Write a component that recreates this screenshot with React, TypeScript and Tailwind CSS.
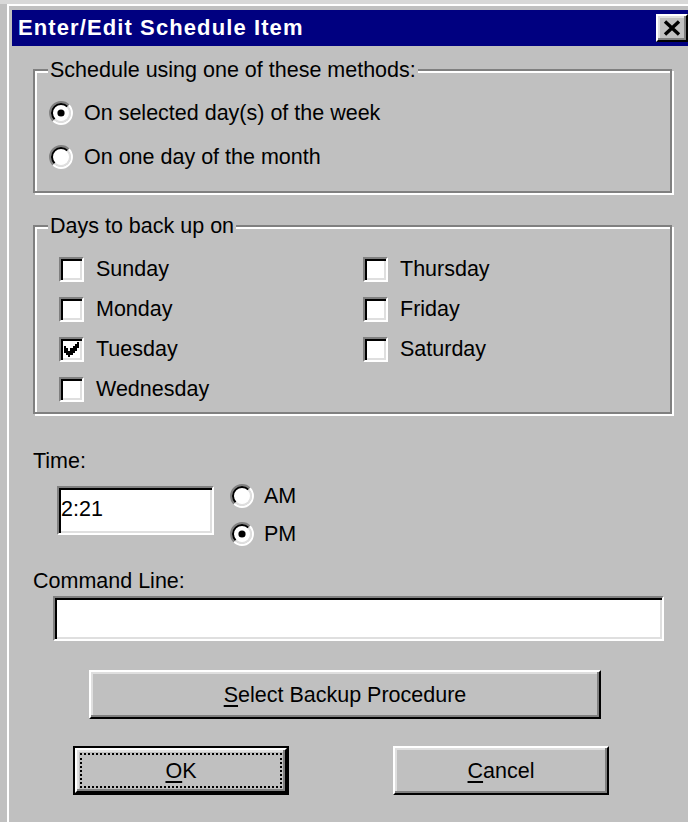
import React from 'react';

const face = "font-['Liberation_Sans',Arial,sans-serif]";

// 3D bevels used across the dialog
const raised =
  'border-2 border-t-white border-l-white border-r-black border-b-black shadow-[inset_-2px_-2px_0_#808080,inset_2px_2px_0_#dfdfdf]';
const sunken =
  'border-2 border-t-[#808080] border-l-[#808080] border-r-white border-b-white shadow-[inset_2px_2px_0_#000,inset_-2px_-2px_0_#dfdfdf]';

const Radio: React.FC<{ checked?: boolean }> = ({ checked }) => (
  <svg width="24" height="24" viewBox="0 0 24 24" className="shrink-0">
    <circle cx="12" cy="12" r="8.5" fill="#fff" />
    <path d="M4.222 19.778 A11 11 0 0 1 19.778 4.222" fill="none" stroke="#808080" strokeWidth="2" />
    <path d="M19.778 4.222 A11 11 0 0 1 4.222 19.778" fill="none" stroke="#fff" strokeWidth="2" />
    <path d="M5.636 18.364 A9 9 0 0 1 18.364 5.636" fill="none" stroke="#000" strokeWidth="2" />
    <path d="M18.364 5.636 A9 9 0 0 1 5.636 18.364" fill="none" stroke="#dfdfdf" strokeWidth="2" />
    {checked && <circle cx="12" cy="12" r="3.6" fill="#000" />}
  </svg>
);

// 7x7 pixel check glyph, drawn at double size
const checkPixels: [number, number][] = [
  [6, 0], [5, 1], [6, 1], [0, 2], [4, 2], [5, 2], [6, 2],
  [0, 3], [1, 3], [3, 3], [4, 3], [5, 3],
  [0, 4], [1, 4], [2, 4], [3, 4], [4, 4],
  [1, 5], [2, 5], [3, 5], [2, 6],
];

const Check: React.FC<{ checked?: boolean }> = ({ checked }) => (
  <span className={`w-[25px] h-[25px] shrink-0 bg-white flex items-center justify-center ${sunken}`}>
    {checked && (
      <svg width="15" height="15" viewBox="0 0 7 7" shapeRendering="crispEdges">
        {checkPixels.map(([x, y]) => (
          <rect key={`${x}-${y}`} x={x} y={y} width="1" height="1" fill="#000" />
        ))}
      </svg>
    )}
  </span>
);

const RadioRow: React.FC<{ label: string; checked?: boolean }> = ({ label, checked }) => (
  <div className="h-[44px] flex items-center gap-[11px]">
    <Radio checked={checked} />
    <span>{label}</span>
  </div>
);

const CheckRow: React.FC<{ label: string; checked?: boolean }> = ({ label, checked }) => (
  <div className="h-[40px] flex items-center gap-[12px]">
    <Check checked={checked} />
    <span>{label}</span>
  </div>
);

const GroupBox: React.FC<{ title: string; className?: string; children: React.ReactNode }> = ({
  title,
  className = '',
  children,
}) => (
  <fieldset className="w-[639px] border-2 border-[#808080] shadow-[inset_2px_2px_0_#fff,2px_2px_0_#fff]">
    <legend className="ml-[13px] px-[2px] leading-[24px] bg-[#c0c0c0]">{title}</legend>
    <div className={className}>{children}</div>
  </fieldset>
);

const App: React.FC = () => {
  return (
    <div
      className={`w-[688px] h-[822px] overflow-hidden bg-[#c0c0c0] border-t-4 border-[#d8d8d8] text-black text-[21.5px] leading-[24px] ${face}`}
    >
      <div className="ml-[7px] w-[720px] h-[900px] border-t-2 border-l-2 border-white pt-[4px] pl-[3px]">
        {/* title bar */}
        <div className="w-[680px] h-[36px] bg-[#000080] flex items-center justify-between pl-[6px] pr-[4px]">
          <span className="text-white font-bold text-[22px] tracking-[1.1px]">Enter/Edit Schedule Item</span>
          <button className={`w-[32px] h-[28px] bg-[#c0c0c0] flex items-center justify-center ${raised}`}>
            <svg width="18" height="16" viewBox="0 0 18 16">
              <path d="M2 1.5 L16 14.5 M16 1.5 L2 14.5" stroke="#000" strokeWidth="3.4" />
            </svg>
          </button>
        </div>

        <div className="pl-[21px] flex flex-col">
          <div className="mt-[12px]">
            <GroupBox title="Schedule using one of these methods:" className="pt-[9px] pb-[12px] pl-[14px]">
              <RadioRow label="On selected day(s) of the week" checked />
              <RadioRow label="On one day of the month" />
            </GroupBox>
          </div>

          <div className="mt-[21px]">
            <GroupBox title="Days to back up on" className="pt-[11px] pb-[3px] pl-[24px] flex">
              <div className="w-[304px] flex flex-col">
                <CheckRow label="Sunday" />
                <CheckRow label="Monday" />
                <CheckRow label="Tuesday" checked />
                <CheckRow label="Wednesday" />
              </div>
              <div className="flex flex-col">
                <CheckRow label="Thursday" />
                <CheckRow label="Friday" />
                <CheckRow label="Saturday" />
              </div>
            </GroupBox>
          </div>

          <div className="mt-[35px] h-[24px]">Time:</div>
          <div className="mt-[11px] ml-[24px] flex items-start">
            <div className={`mt-[2px] w-[157px] h-[49px] bg-white flex items-center pl-[2px] pb-[4px] ${sunken}`}>
              2:21
            </div>
            <div className="ml-[16px] flex flex-col">
              <div className="h-[24px] flex items-center gap-[10px]">
                <Radio />
                <span>AM</span>
              </div>
              <div className="mt-[14px] h-[24px] flex items-center gap-[10px]">
                <Radio checked />
                <span>PM</span>
              </div>
            </div>
          </div>

          <div className="mt-[23px] h-[24px]">Command Line:</div>
          <div className={`mt-[3px] ml-[20px] w-[611px] h-[45px] bg-white ${sunken}`} />

          <button className={`mt-[29px] ml-[56px] w-[512px] h-[49px] bg-[#c0c0c0] flex items-center justify-center ${raised}`}>
            <span>
              <u className="underline-offset-[3px]">S</u>elect Backup Procedure
            </span>
          </button>

          <div className="mt-[27px] ml-[40px] flex gap-[104px]">
            <div className="w-[216px] h-[49px] border-2 border-black">
              <div className={`w-full h-full bg-[#c0c0c0] p-[3px] ${raised}`}>
                <div className="w-full h-full border-2 border-dotted border-black flex items-center justify-center">
                  <span>
                    <u className="underline-offset-[3px]">O</u>K
                  </span>
                </div>
              </div>
            </div>
            <button className={`w-[216px] h-[49px] bg-[#c0c0c0] flex items-center justify-center ${raised}`}>
              <span>
                <u className="underline-offset-[3px]">C</u>ancel
              </span>
            </button>
          </div>
        </div>
      </div>
    </div>
  );
};

export default App;
